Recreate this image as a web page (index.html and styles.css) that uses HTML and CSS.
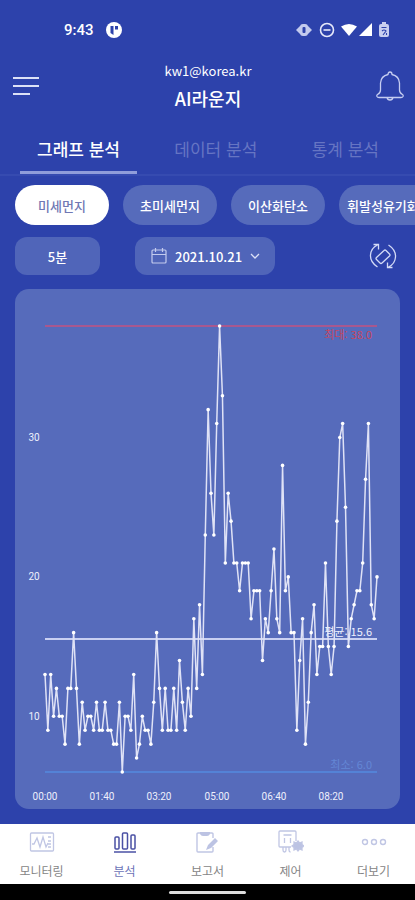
FILE: index.html
```
<!doctype html>
<html lang="ko">
<head>
    <meta charset="utf-8"/>
    <meta name="viewport" content="width=device-width, initial-scale=1">
    <title>AI라운지</title>
    <link rel="stylesheet" href="styles.css">
</head>
<body>

<div class="statusbar">
    <span class="clock">9:43</span>
    <svg class="app-dot" width="16" height="16" viewBox="0 0 16 16"><circle cx="8" cy="8" r="8" fill="#fff"/><path d="M4.500 4h3v9L4.500 11zM9 4h3v3.500H9z" fill="#2d42ab"/></svg>
    <div class="status-icons">
        <svg width="18" height="16" viewBox="0 0 18 16"><path d="M1 8l4-4h8l4 4-4 4H5z" fill="#c3caee"/><rect x="5" y="2" width="8" height="12" rx="3" fill="#c3caee"/><rect x="7.500" y="5" width="3" height="6" rx="1" fill="#2d42ab"/></svg>
        <svg width="16" height="16" viewBox="0 0 16 16" fill="none" stroke="#e6e9fa" stroke-width="1.600"><circle cx="8" cy="8" r="6.500"/><path d="M4.500 8h7"/></svg>
        <svg width="16" height="16" viewBox="0 0 16 16"><path d="M0 4.500Q8-.5 16 4.500L8 14z" fill="#fff"/></svg>
        <svg width="14" height="16" viewBox="0 0 14 16"><path d="M14 1v13H1z" fill="#fff"/></svg>
        <svg class="battery" width="12" height="16" viewBox="0 0 12 16"><path d="M4 0h4v2h1q2 0 2 2v9q0 2-2 2H3q-2 0-2-2V4q0-2 2-2h1z" fill="#c9cff0"/><path d="M3.500 5.500h5M4 9q2-2 4 0l-3 4M8.500 11v2" fill="none" stroke="#2d42ab" stroke-width="1.100"/></svg>
    </div>
</div>

<header class="header">
    <button class="icon-btn" aria-label="메뉴">
        <svg width="28" height="22" viewBox="0 0 28 22" fill="none" stroke="#dce1f7" stroke-width="2"><path d="M1 3h26M1 11h26M1 19h17"/></svg>
    </button>
    <div class="title">
        <p>kw1@korea.kr</p>
        <h1>AI라운지</h1>
    </div>
    <button class="icon-btn" aria-label="알림">
        <svg width="28" height="32" viewBox="0 0 28 32" fill="none" stroke="#c5cdf1" stroke-width="1.300" stroke-linejoin="round"><path d="M12 4.500q0-2.500 2-2.500t2 2.500q7 1.500 7.500 8.500v7q0 3 3 4.500 1 .5.500 2-.5 1-2 1H3q-1.500 0-2-1-.5-1.500.5-2 3-1.500 3-4.500v-7q.5-7 7.500-8.500zM11 27.500q.5 2.500 3 2.500t3-2.500"/></svg>
    </button>
</header>

<nav class="tabs">
    <a class="active" href="#graph">그래프 분석</a>
    <a href="#data">데이터 분석</a>
    <a href="#stats">통계 분석</a>
</nav>

<div class="chips">
    <button class="chip active">미세먼지</button>
    <button class="chip">초미세먼지</button>
    <button class="chip">이산화탄소</button>
    <button class="chip">휘발성유기화합물</button>
</div>

<div class="filters">
    <button class="interval">5분</button>
    <button class="date">
        <svg width="16" height="18" viewBox="0 0 16 18" fill="none" stroke="#c3cbee" stroke-width="1.200"><rect x="1" y="3" width="14" height="13" rx="1"/><path d="M1 7.500h14M4.500 1v4M11.500 1v4"/></svg>
        2021.10.21
        <svg width="10" height="8" viewBox="0 0 10 8" fill="none" stroke="#dce1f7" stroke-width="1.300"><path d="M1 2l4 4 4-4"/></svg>
    </button>
    <button class="icon-btn rotate" aria-label="화면 회전">
        <svg width="28" height="28" viewBox="0 0 28 28" fill="none" stroke="#d3daf6" stroke-width="1.300"><path d="M17 8.500l3.500 3.500q1 1 0 2L13 21q-1 1-2 0l-3.500-3.500q-1-1 0-2L15 8.500q1-1 2 0zM8.500 25Q1 20 1.500 13 2 6 8.500 3M4.500 2.500h5v5M19.500 3Q27 8 26.500 15 26 22 19.500 25M23.500 25.500h-5v-5"/></svg>
    </button>
</div>

<main class="card">
    <svg class="chart" viewBox="0 0 385 520" role="img" aria-label="미세먼지 그래프">
        <path class="max-line" d="M30 37H362"/>
        <path class="avg-line" d="M30 350H362"/>
        <path class="min-line" d="M30 483H362"/>
        <polyline id="line" class="line"/>
        <g id="dots" class="dots"></g>
        <g class="axis">
            <text x="19" y="152">30</text>
            <text x="19" y="291">20</text>
            <text x="19" y="431">10</text>
            <text x="30" y="511">00:00</text>
            <text x="87" y="511">01:40</text>
            <text x="144" y="511">03:20</text>
            <text x="202" y="511">05:00</text>
            <text x="259" y="511">06:40</text>
            <text x="316" y="511">08:20</text>
        </g>
        <g class="limits">
            <text class="max" x="357" y="50">최대: 38.0</text>
            <text class="avg" x="357" y="347">평균: 15.6</text>
            <text class="min" x="357" y="480">최소: 6.0</text>
        </g>
    </svg>
</main>

<nav class="bottom">
    <a href="#monitoring">
        <svg width="26" height="24" viewBox="0 0 26 24" fill="none" stroke="#c0c6e4" stroke-width="1.300"><rect x="1.500" y="3" width="23" height="18" rx="1"/><path d="M3 14h2l3-6 3 9 3-10 3 10 2-4M19 7h3M19 11h3M19 14h3M19 17h3"/></svg>
        모니터링
    </a>
    <a class="active" href="#analysis">
        <svg width="26" height="24" viewBox="0 0 26 24" fill="none" stroke="#4a50a4" stroke-width="1.500"><rect x="3" y="7" width="4" height="12" rx="1"/><rect x="10.500" y="3" width="5" height="16" rx="1"/><rect x="19" y="5" width="4" height="14" rx="1"/><path d="M2 22h22"/></svg>
        분석
    </a>
    <a href="#report">
        <svg width="26" height="24" viewBox="0 0 26 24" fill="none" stroke="#c0c6e4" stroke-width="1.400"><path d="M18 8V4q0-1-1-1H3Q2 3 2 4v17q0 1 1 1h14q1 0 1-1v-4"/><path d="M5 2h10v2q-1 2-3 2H8Q6 6 5 4zM20 8l3 3-7 7-5 2 2-5z" fill="#bcc3e3" stroke="none"/></svg>
        보고서
    </a>
    <a href="#control">
        <svg width="26" height="24" viewBox="0 0 26 24" fill="none" stroke="#c0c6e4" stroke-width="1.300"><path d="M13 17H2q-1 0-1-1V2q0-1 1-1h15q1 0 1 1v9M5.500 5h8M6.500 13V8M12.500 13V8M5 17v3q0 2 1.500 2T8 20v-3M11 17v3q0 2 1.500 2"/><path d="M20 11l1.500 2 2.500-1v2.500l2 1.500-2 1.500v2.500l-2.500-1-1.500 2-1.500-2-2.500 1v-2.500L14 16l2-1.500V12l2.500 1z" fill="#bcc3e3"/></svg>
        제어
    </a>
    <a href="#more">
        <svg width="26" height="24" viewBox="0 0 26 24" fill="none" stroke="#c0c6e4" stroke-width="1.400"><circle cx="4" cy="12" r="2.500"/><circle cx="13" cy="12" r="2.500"/><circle cx="22" cy="12" r="2.500"/></svg>
        더보기
    </a>
</nav>
<div class="homebar"><span></span></div>

<script src="chart.js"></script>
</body>
</html>
```
FILE: styles.css
```
* {
    box-sizing: border-box;
}
body {
    margin: 0;
    min-height: 100vh;
    display: flex;
    flex-direction: column;
    overflow-x: hidden;
    background: #2d42ab;
    color: #fff;
    font-family: "Noto Sans CJK KR", "Noto Sans", sans-serif;
}
svg {
    display: block;
    flex: none;
}
a {
    color: inherit;
    text-decoration: none;
}
button {
    padding: 0;
    border: 0;
    background: none;
    color: inherit;
    font: inherit;
}
.statusbar {
    display: flex;
    align-items: center;
    height: 60px;
    padding: 0 25px 0 64px;
}
.clock {
    font: 500 15px/20px Roboto, sans-serif;
}
.app-dot {
    margin-left: 12px;
}
.status-icons {
    display: flex;
    margin-left: auto;
}
.status-icons svg + svg {
    margin-left: 6px;
}
.status-icons svg:nth-child(4) {
    margin-left: 1px;
}
.header {
    display: flex;
    align-items: center;
    justify-content: space-between;
    height: 54px;
    padding: 0 11px 2px 12px;
}
.title {
    text-align: center;
}
.title p {
    margin: 0;
    font-size: 13px;
    line-height: 24px;
}
.title h1 {
    margin: 0;
    font-size: 18px;
    font-weight: 500;
    line-height: 30px;
}
.tabs {
    display: flex;
    justify-content: space-between;
    height: 62px;
    padding: 0 19px 0 20px;
    border-bottom: 2px solid #364bb0;
    color: #6675c3;
    font-size: 17px;
    line-height: 70px;
}
.tabs a {
    padding: 0 17px;
}
.tabs .active {
    border-bottom: 3px solid #909dda;
    color: #fff;
    font-weight: 500;
}
.chips {
    display: flex;
    gap: 14px;
    padding: 9px 0 0 15px;
    overflow-x: auto;
    scrollbar-width: none;
}
.chip {
    flex: none;
    min-width: 94px;
    height: 40px;
    padding: 0 8px;
    border-radius: 20px;
    background: #566bbb;
    font-size: 13px;
    font-weight: 500;
}
.chip.active {
    background: #fff;
    color: #7078b4;
}
.filters {
    display: flex;
    align-items: center;
    padding: 12px 18px 14px 15px;
    font-size: 13px;
    font-weight: 500;
}
.interval, .date {
    height: 38px;
    border-radius: 12px;
    background: #5065b9;
}
.interval {
    width: 85px;
}
.date {
    display: flex;
    align-items: center;
    gap: 8px;
    margin-left: 35px;
    padding: 0 15px 0 16px;
}
.rotate {
    margin-left: auto;
}
.card {
    margin: 0 15px;
    border-radius: 14px;
    background: #566bbb;
}
.chart {
    width: 100%;
    height: auto;
}
.max-line, .avg-line, .min-line {
    fill: none;
    stroke-width: 2;
}
.max-line {
    stroke: #a8588f;
}
.avg-line {
    stroke: #c9d0f2;
}
.min-line {
    stroke: #5482d6;
}
.line {
    fill: none;
    stroke: #dfe2f6;
    stroke-width: 1.5;
}
.dots {
    fill: #fff;
}
.axis {
    fill: #eef0fc;
    font-family: Roboto, sans-serif;
    font-size: 10px;
    text-anchor: middle;
}
.limits {
    font-size: 11px;
    text-anchor: end;
}
.limits .max {
    fill: #c8465f;
}
.limits .avg {
    fill: #eef0fc;
}
.limits .min {
    fill: #6487d6;
}
.bottom {
    display: grid;
    grid-template-columns: repeat(5, 1fr);
    height: 60px;
    margin-top: auto;
    background: #fff;
    color: #858585;
    font-size: 12px;
    line-height: 18px;
}
.bottom a {
    display: flex;
    flex-direction: column;
    align-items: center;
    gap: 8px;
    padding-top: 6px;
}
.bottom .active {
    color: #6d73b8;
}
.homebar {
    display: flex;
    align-items: center;
    justify-content: center;
    height: 16px;
    background: #000;
}
.homebar span {
    width: 77px;
    height: 3px;
    border-radius: 2px;
    background: #ddd;
}
```
FILE: chart.js
```
// one value every 5 minutes, starting at 00:00
let values = [
    13, 9, 13, 10, 12, 10, 10, 8, 12, 12, 16, 12, 8, 11, 9, 10, 10, 9, 11, 9,
    9, 11, 9, 9, 8, 8, 11, 6, 10, 10, 9, 13, 7, 8, 10, 9, 9, 8, 11, 16,
    12, 9, 12, 9, 9, 12, 9, 14, 11, 9, 12, 10, 17, 12, 18, 13, 23, 32, 26, 23,
    31, 38, 33, 21, 26, 24, 21, 21, 19, 21, 21, 21, 17, 19, 19, 19, 14, 17, 16, 19,
    22, 17, 16, 28, 19, 20, 16, 16, 9, 14, 17, 8, 11, 16, 18, 13, 15, 15, 21, 15,
    13, 15, 24, 30, 31, 25, 15, 17, 18, 19, 19, 21, 27, 31, 18, 17, 20
];

let left = 30, right = 362, top38 = 37, bottom6 = 483;

let points = values.map((v, i) => [
    left + (right - left) * i / (values.length - 1),
    bottom6 - (v - 6) * (bottom6 - top38) / 32
]);

document.querySelector("#line").setAttribute("points", points.map(p => p.join(",")).join(" "));

let dots = document.querySelector("#dots");
points.forEach(p => {
    let c = document.createElementNS("http://www.w3.org/2000/svg", "circle");
    c.setAttribute("cx", p[0]);
    c.setAttribute("cy", p[1]);
    c.setAttribute("r", 1.8);
    dots.appendChild(c);
});
```
